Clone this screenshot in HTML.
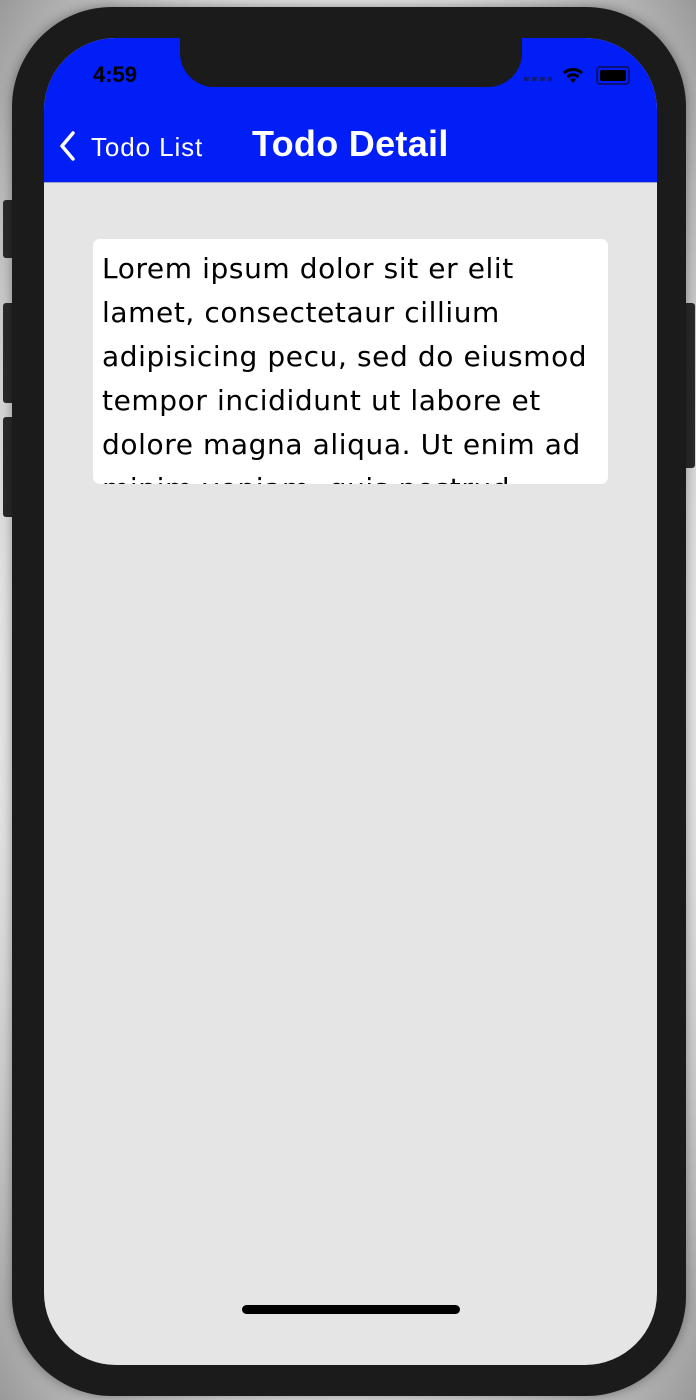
<!DOCTYPE html>
<html><head><style>
body{margin:0;width:696px;height:1400px;background:#c8c8c8;position:relative;overflow:hidden;font-family:"Liberation Sans","Noto Sans CJK JP",sans-serif}
.bg{position:absolute;inset:0;background:radial-gradient(ellipse at center,#fff 60%,#9a9a9a 100%)}
.btn{position:absolute;background:#2a2a2a;border-radius:3px}
.body{position:absolute;left:12px;top:7px;width:674px;height:1389px;background:#1b1b1b;border-radius:100px;box-shadow:0 0 12px rgba(0,0,0,.4)}
.screen{position:absolute;left:44px;top:38px;width:613px;height:1327px;background:#e5e5e5;border-radius:72px;overflow:hidden}
.nav{position:absolute;left:0;top:0;width:613px;height:144px;background:#001ef5;border-bottom:1px solid #9aa3c8}
.notch{position:absolute;left:136px;top:-2px;width:342px;height:51px;background:#1b1b1b;border-radius:0 0 34px 34px}
.time{position:absolute;left:49px;top:24px;font-size:22px;font-weight:bold;color:#000}
.title{position:absolute;left:208px;top:85px;font-size:36px;font-weight:bold;color:#fff;letter-spacing:0.3px}
.back{position:absolute;left:47px;top:94px;font-size:26px;color:#fff;letter-spacing:0.9px}
.card{position:absolute;left:49px;top:201px;width:515px;height:245px;background:#fff;border-radius:7px;overflow:hidden}
.card p{margin:0;padding:8px 9px;font-family:"DejaVu Sans",sans-serif;font-size:28px;line-height:44px;color:#000;white-space:nowrap;letter-spacing:0.6px}
.home{position:absolute;left:198px;top:1267px;width:218px;height:9px;background:#000;border-radius:5px}
</style></head><body>
<div class="bg"></div>
<div class="btn" style="left:3px;top:200px;width:12px;height:58px"></div>
<div class="btn" style="left:3px;top:303px;width:12px;height:100px"></div>
<div class="btn" style="left:3px;top:417px;width:12px;height:100px"></div>
<div class="btn" style="left:683px;top:303px;width:12px;height:165px"></div>
<div class="body"></div>
<div class="screen">
 <div class="nav">
  <div class="time">4:59</div>
  <div style="position:absolute;left:480px;top:39px;width:28px;height:4px;background:repeating-linear-gradient(90deg,#0f1a80 0 5px,transparent 5px 8px)"></div>
  <svg style="position:absolute;left:517px;top:27px" width="24" height="20" viewBox="0 0 24 20"><path d="M12 18l-3-3.5a4.5 4.5 0 0 1 6 0z M5.5 10.8a9.5 9.5 0 0 1 13 0l-2 2.2a6.5 6.5 0 0 0-9 0z M2 7a14.5 14.5 0 0 1 20 0l-2 2.2a11.5 11.5 0 0 0-16 0z" fill="#000"/></svg>
  <div style="position:absolute;left:552px;top:28px;width:30px;height:15px;border:2px solid #0a127a;border-radius:4px"><div style="position:absolute;left:2px;top:2px;width:26px;height:11px;background:#000;border-radius:2px"></div></div>
  <svg style="position:absolute;left:14px;top:92px" width="20" height="32" viewBox="0 0 20 32"><path d="M15 3L4 16l11 13" stroke="#fff" stroke-width="3.5" fill="none" stroke-linecap="round" stroke-linejoin="round"/></svg>
  <div class="back">Todo List</div>
  <div class="title">Todo Detail</div>
 </div>
 <div class="notch"></div>
 <div class="card"><p>Lorem ipsum dolor sit er elit<br>lamet, consectetaur cillium<br>adipisicing pecu, sed do eiusmod<br>tempor incididunt ut labore et<br>dolore magna aliqua. Ut enim ad<br>minim veniam, quis nostrud</p></div>
 <div class="home"></div>
</div>
</body></html>
